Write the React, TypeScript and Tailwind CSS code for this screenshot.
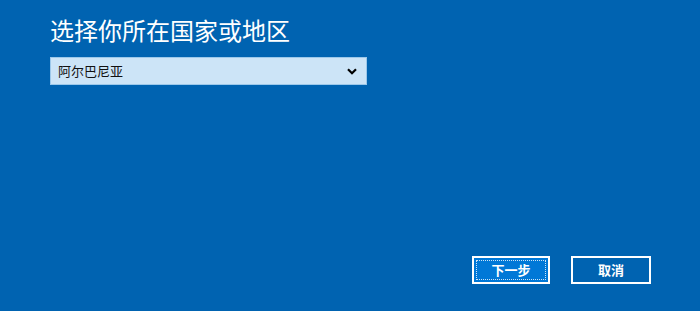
import React from 'react';

const FONT = { fontFamily: '"Microsoft YaHei", "Noto Sans CJK SC", "Noto Sans", sans-serif' };

export default function App() {
  return (
    <div className="w-[700px] h-[311px] bg-[#0063b1] text-white flex flex-col" style={FONT}>
      <div className="pl-[50px] pt-[15px]">
        <h1 className="text-[24px] leading-[30px] font-normal">选择你所在国家或地区</h1>
        <div className="mt-[12px] w-[317px] h-[28px] bg-[#cce4f7] border border-[#9cc8ea] flex items-center justify-between pl-[7px] pr-[8px] text-[#111] text-[13px]">
          <span>阿尔巴尼亚</span>
          <svg width="10" height="7" viewBox="0 0 10 7" className="mr-[1px]">
            <path d="M1 1.2 L5 5.2 L9 1.2" fill="none" stroke="#000" strokeWidth="2.2" />
          </svg>
        </div>
      </div>
      <div className="flex-1" />
      <div className="flex justify-end gap-[21px] pr-[49px] pb-[27px]">
        <button className="w-[78px] h-[28px] border-2 border-white bg-[#0078d7] p-[2px] flex">
          <span className="flex-1 border border-dotted border-white/80 flex items-center justify-center text-[13px] font-bold">
            下一步
          </span>
        </button>
        <button className="w-[80px] h-[28px] border-2 border-white flex items-center justify-center text-[13px] font-bold">
          取消
        </button>
      </div>
    </div>
  );
}
